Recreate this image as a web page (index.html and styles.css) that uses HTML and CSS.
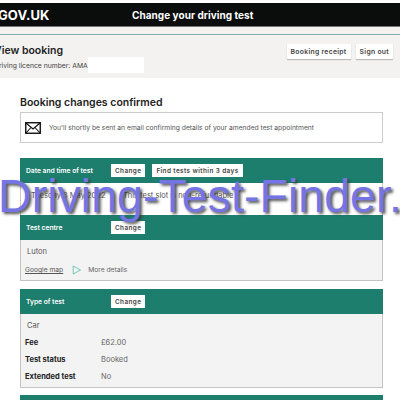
FILE: index.html
```html
<!DOCTYPE html>
<html lang="en">
<head>
<meta charset="utf-8">
<title>Change your driving test</title>
<link rel="stylesheet" href="styles.css">
</head>
<body>
<div class="topgap"></div>
<header class="masthead">
  <span class="logo">GOV.UK</span>
  <span class="service">Change your driving test</span>
</header>
<div class="strip"></div>
<section class="account">
  <div class="account-text">
    <h1>View booking</h1>
    <p class="licence">Driving licence number: AMA<span class="redact"></span></p>
  </div>
  <div class="account-actions">
    <button class="btn">Booking receipt</button>
    <button class="btn">Sign out</button>
  </div>
</section>
<main class="content">
  <h2>Booking changes confirmed</h2>
  <div class="notice">
    <svg class="mail" viewBox="0 0 16 12" aria-hidden="true"><rect x=".75" y=".75" width="14.5" height="10.5" fill="#fff" stroke="#111" stroke-width="1.4"/><path d="M1 1l7 6 7-6M1 11l5-5.5M15 11l-5-5.5" fill="none" stroke="#111" stroke-width="1.1"/></svg>
    <span>You'll shortly be sent an email confirming details of your amended test appointment</span>
  </div>

  <section class="panel">
    <div class="panel-head"><strong>Date and time of test</strong><button class="btn small">Change</button><button class="btn small">Find tests within 3 days</button></div>
    <div class="panel-row date-row"><span class="date">Tuesday 3 May 2022</span><span>This test slot is non-refundable</span></div>
    <div class="panel-head"><strong>Test centre</strong><button class="btn small">Change</button></div>
    <div class="panel-body">
      <p class="value">Luton</p>
      <p class="links"><a href="#">Google map</a><svg class="play" viewBox="0 0 10 10" aria-hidden="true"><path d="M1.2 1l7.4 4-7.4 4z" fill="none" stroke="#5fc4b4" stroke-width=".9"/></svg><span>More details</span></p>
    </div>
  </section>

  <section class="panel">
    <div class="panel-head"><strong>Type of test</strong><button class="btn small">Change</button></div>
    <div class="panel-body">
      <p class="value">Car</p>
      <dl class="facts">
        <dt>Fee</dt><dd>£62.00</dd>
        <dt>Test status</dt><dd>Booked</dd>
        <dt>Extended test</dt><dd>No</dd>
      </dl>
    </div>
  </section>
  <div class="panel-next"></div>
</main>
<div class="watermark">Driving-Test-Finder.</div>
</body>
</html>
```
FILE: styles.css
```css
html, body { margin: 0; padding: 0; }
body {
  width: 400px;
  height: 400px;
  overflow: hidden;
  position: relative;
  background: #fff;
  color: #333;
  font-family: Inter, "Noto Sans", sans-serif;
  font-size: 7.5px;
}
.topgap { height: 3px; background: #fff; }
.masthead {
  height: 23px;
  background: #0b0c0c;
  color: #fff;
  display: flex;
  align-items: center;
  font-weight: 700;
  border-bottom: 1px solid #777;
}
.logo { width: 134px; font-size: 13px; margin-left: -2px; letter-spacing: .1px; }
.service { font-size: 10px; letter-spacing: .04px; }
.strip { height: 7px; background: #f3f2f1; border-bottom: 1px solid #7fb0ac; }
.account {
  height: 43px;
  background: #f3f2f1;
  display: flex;
  justify-content: space-between;
  align-items: flex-start;
  padding-right: 7px;
}
.account-text { margin-left: -6px; padding-top: 10px; }
h1 { margin: 0; font-size: 10.5px; line-height: 12px; font-weight: 600; color: #222; }
.licence { margin: 0; display: flex; align-items: center; height: 16px; color: #444; font-size: 6.8px; }
.redact { width: 56px; height: 16px; background: #fff; }
.account-actions { display: flex; gap: 5px; padding-top: 9px; }
.btn {
  font: 600 6.8px Inter, "Noto Sans", sans-serif;
  letter-spacing: .3px;
  color: #444;
  background: #fff;
  border: 0;
  box-shadow: 0 1px 1px #bbb;
  height: 15px;
  padding: 0 4px;
  white-space: nowrap;
}
.content { padding: 0 5px 0 20px; }
h2 { margin: 18px 0 0; font-size: 10.5px; line-height: 14px; font-weight: 600; color: #222; }
.notice {
  margin-top: 2px;
  height: 29px;
  border: 1px solid #ccc;
  width: 361px;
  display: flex;
  align-items: center;
  font-size: 6.72px;
  color: #555;
}
.mail { width: 16px; height: 12px; margin: 0 8px 0 4px; }
.panel { width: 363px; margin-top: 8px; border: 0; }
.notice + .panel { margin-top: 15px; }
.panel-head {
  height: 25px;
  background: #1d7e6e;
  color: #fff;
  display: flex;
  align-items: center;
  gap: 7px;
  padding-left: 6px;
  font-size: 6.7px;
}
.panel-head strong { width: 78px; font-weight: 600; }
.btn.small { height: 13px; padding: 0 4px; box-shadow: none; font-size: 6.4px; letter-spacing: .4px; }
.panel-row {
  height: 32px;
  display: flex;
  align-items: center;
  padding-left: 10px;
  color: #555;
  border-left: 1px solid #ccc;
  border-right: 1px solid #ccc;
  background: #fff;
  box-sizing: border-box;
  padding-bottom: 7px;
}
.date { width: 92px; }
.panel-body {
  background: #f3f3f3;
  border: 1px solid #c4c4c4;
  border-top: 0;
  padding-bottom: 4px;
}
.value { margin: 0; padding: 6px 6px 0; line-height: 12px; color: #555; }
.links { margin: 0; padding: 6px 4px 0; display: flex; align-items: center; height: 12px; color: #666; font-size: 6.7px; }
.links a { color: #555; }
.play { width: 10px; height: 10px; margin: 0 6px 0 9px; }
.facts {
  margin: 5px 0 0;
  display: grid;
  grid-template-columns: 76px 1fr;
  row-gap: 5px;
  padding-left: 4px;
  line-height: 12px;
}
.facts dt { font-weight: 700; color: #222; }
.facts dd { margin: 0; color: #666; }
.panel-next { width: 363px; height: 10px; background: #1d7e6e; margin-top: 7px; }
.watermark {
  position: absolute;
  left: -2px;
  top: 169px;
  font: 46.6px/54px "Liberation Sans", sans-serif;
  color: #7474e4;
  text-shadow: 2px 2px 3px rgba(50,50,50,.85);
  white-space: nowrap;
}
```
